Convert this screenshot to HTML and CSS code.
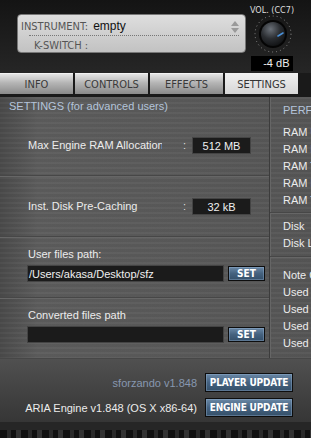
FILE: index.html
```html
<!DOCTYPE html>
<html lang="en">
<head>
  <meta charset="UTF-8">
  <meta name="viewport" content="width=device-width, initial-scale=1.0">
  <title>sforzando settings</title>
  <link rel="stylesheet" href="styles.css">
</head>
<body>
  <div class="player">
    <header class="header">
      <div class="instrument">
        <div class="inst-row inst-main">
          <span class="inst-label">INSTRUMENT:</span>
          <span class="inst-name">empty</span>
          <svg class="spinner" width="8" height="12" viewBox="0 0 8 12">
            <path d="M4 0 L8 5 L0 5 Z" fill="#9a9a9a"/>
            <path d="M4 12 L8 7 L0 7 Z" fill="#9a9a9a"/>
          </svg>
        </div>
        <div class="inst-row">
          <span class="inst-label kswitch">K-SWITCH :</span>
        </div>
      </div>
      <div class="volume">
        <div class="vol-label">VOL. (CC7)</div>
        <svg class="knob" width="40" height="40" viewBox="0 0 40 40">
          <defs>
            <radialGradient id="knobFace" cx="0.4" cy="0.3" r="0.8">
              <stop offset="0" stop-color="#6a7078"/>
              <stop offset="0.5" stop-color="#2a2d31"/>
              <stop offset="1" stop-color="#0c0d0e"/>
            </radialGradient>
          </defs>
          <circle cx="20" cy="20" r="18" fill="none" stroke="#8a8a8a" stroke-width="1" stroke-dasharray="1 3"/>
          <circle cx="20" cy="20" r="14" fill="#050505"/>
          <circle cx="20" cy="20" r="12" fill="url(#knobFace)"/>
          <line x1="25" y1="22" x2="30" y2="19" stroke="#4a90d8" stroke-width="1.6" stroke-linecap="round"/>
        </svg>
        <div class="vol-value">-4 dB</div>
      </div>
    </header>

    <nav class="tabs">
      <div class="tab">INFO</div>
      <div class="tab">CONTROLS</div>
      <div class="tab">EFFECTS</div>
      <div class="tab active">SETTINGS</div>
    </nav>

    <main class="panel">
      <section class="settings">
        <div class="title">SETTINGS (for advanced users)</div>

        <div class="block">
          <div class="field">
            <span class="field-label">Max Engine RAM Allocation</span>
            <span class="colon">:</span>
            <span class="value">512 MB</span>
          </div>
        </div>

        <div class="block">
          <div class="field">
            <span class="field-label">Inst. Disk Pre-Caching</span>
            <span class="colon">:</span>
            <span class="value">32 kB</span>
          </div>
        </div>

        <div class="block path-block">
          <div class="path-label">User files path:</div>
          <div class="path-row">
            <span class="path">/Users/akasa/Desktop/sfz</span>
            <button class="btn btn-set">SET</button>
          </div>
        </div>

        <div class="block path-block">
          <div class="path-label">Converted files path</div>
          <div class="path-row">
            <span class="path"></span>
            <button class="btn btn-set">SET</button>
          </div>
        </div>
      </section>

      <aside class="perf">
        <div class="title">PERFORMANCE</div>
        <div class="perf-group first">
          <div>RAM Used</div>
          <div>RAM Free</div>
          <div>RAM Total</div>
          <div>RAM Limit</div>
          <div>RAM Tot.</div>
        </div>
        <div class="perf-group">
          <div>Disk</div>
          <div>Disk Load</div>
        </div>
        <div class="perf-group">
          <div>Note Count</div>
          <div>Used</div>
          <div>Used</div>
          <div>Used</div>
          <div>Used</div>
        </div>
      </aside>
    </main>

    <footer class="versions">
      <div class="version-row">
        <span class="player-version">sforzando v1.848</span>
        <button class="btn btn-update">PLAYER UPDATE</button>
      </div>
      <div class="version-row">
        <span class="engine-version">ARIA Engine v1.848 (OS X x86-64)</span>
        <button class="btn btn-update">ENGINE UPDATE</button>
      </div>
    </footer>

    <div class="keys"></div>
  </div>
</body>
</html>
```

FILE: styles.css
```css
body {
  margin: 0;
  background: #1e1e1e;
  font-family: 'Liberation Sans', Arial, sans-serif;
}

.player {
  width: 311px;
  height: 438px;
  overflow: hidden;
  display: flex;
  flex-direction: column;
  background: #1e1e1e;
}

/* header */
.header {
  height: 73px;
  display: flex;
  background: linear-gradient(to bottom, #141414, #262626);
  box-sizing: border-box;
  padding-left: 17px;
}

.instrument {
  width: 229px;
  height: 39px;
  margin-top: 14px;
  box-sizing: border-box;
  border: 1px solid #777;
  border-radius: 4px;
  background: linear-gradient(to bottom, #dedede, #c2c2c2);
  padding: 0 6px 0 3px;
}

.inst-row {
  height: 18px;
  display: flex;
  align-items: center;
}

.inst-main {
  border-bottom: 1px dotted #777;
  margin-left: 8px;
  padding-top: 2px;
}

.inst-label {
  font-family: 'Liberation Sans Narrow', 'DejaVu Sans Condensed', sans-serif;
  font-size: 11px;
  color: #555;
}

.inst-main .inst-label {
  margin-left: -8px;
}

.kswitch {
  margin-left: 13px;
}

.inst-name {
  margin-left: 5px;
  font-size: 12px;
  color: #111;
  flex: 1;
}

.spinner {
  margin-top: 1px;
}

.volume {
  width: 46px;
  margin-left: 1px;
  display: flex;
  flex-direction: column;
  align-items: center;
  padding-top: 5px;
}

.vol-label {
  font-family: 'Liberation Sans Narrow', 'DejaVu Sans Condensed', sans-serif;
  font-size: 9px;
  color: #ddd;
  white-space: nowrap;
  margin-left: 4px;
}

.knob {
  margin: -1px 0 0 6px;
}

.vol-value {
  width: 42px;
  height: 15px;
  margin: 2px 0 0 3px;
  background: #000;
  color: #eee;
  font-size: 11px;
  line-height: 15px;
  text-align: right;
  padding-right: 3px;
  box-sizing: border-box;
}

/* tabs */
.tabs {
  height: 24px;
  display: flex;
  gap: 2px;
  background: #1a1a1a;
  padding-bottom: 3px;
  box-sizing: border-box;
}

.tab {
  width: 73px;
  height: 21px;
  line-height: 21px;
  text-align: center;
  font-family: 'Liberation Sans Narrow', 'DejaVu Sans Condensed', sans-serif;
  font-size: 11px;
  color: #3a3a3a;
  background: linear-gradient(to bottom, #e4e4e4, #b4b4b4 45%, #8a8a8a);
  border-top: 1px solid #f2f2f2;
  box-sizing: border-box;
}

.tab.active {
  background: linear-gradient(to bottom, #f0f0f0, #d6d6d6);
  color: #333;
}

/* main panel */
.panel {
  height: 261px;
  display: grid;
  grid-template-columns: 270px 1fr;
  background:
    repeating-linear-gradient(to bottom, rgba(255,255,255,0.025) 0, rgba(255,255,255,0.025) 2px, rgba(0,0,0,0.03) 2px, rgba(0,0,0,0.03) 5px),
    linear-gradient(to right, #4a4a4a, #5d5d5d 12%, #5a5a5a 60%, #565656);
}

.title {
  height: 18px;
  line-height: 18px;
  font-size: 11px;
  color: #b4c4da;
  padding-left: 9px;
}

.settings {
  border-right: 1px solid #3c3c3c;
  box-shadow: 1px 0 0 #666;
}

.block {
  height: 61px;
  box-sizing: border-box;
  border-bottom: 1px solid #474747;
  box-shadow: 0 1px 0 #666;
  padding-left: 28px;
}

.field {
  display: flex;
  align-items: center;
  height: 100%;
}

.field-label {
  width: 134px;
  overflow: hidden;
  white-space: nowrap;
  font-size: 11px;
  color: #ececec;
}

.colon {
  width: 30px;
  text-align: right;
  padding-right: 6px;
  box-sizing: border-box;
  font-size: 11px;
  color: #ddd;
}

.value {
  width: 59px;
  height: 17px;
  line-height: 17px;
  background: #1b1b1b;
  border: 1px solid #444;
  box-sizing: border-box;
  font-size: 11px;
  color: #f0f0f0;
  text-align: center;
}

.path-block {
  padding-left: 27px;
  padding-top: 11px;
}

.path-label {
  font-size: 11px;
  color: #ececec;
  padding-left: 1px;
  height: 16px;
}

.path-row {
  display: flex;
  align-items: center;
  gap: 4px;
  margin-top: 1px;
}

.path {
  width: 197px;
  height: 17px;
  line-height: 17px;
  background: #1b1b1b;
  border: 1px solid #444;
  box-sizing: border-box;
  font-size: 11px;
  color: #f0f0f0;
  padding-left: 1px;
  white-space: nowrap;
}

.btn {
  font-family: 'Liberation Sans Narrow', 'DejaVu Sans Condensed', sans-serif;
  font-weight: bold;
  color: #fff;
  border: 1px solid #0e0e0e;
  background: linear-gradient(to bottom, #6a88a6, #45627f 50%, #35506a);
  box-shadow: inset 0 0 0 1px rgba(160,190,220,0.35);
  padding: 0;
  cursor: pointer;
}

.btn-set {
  width: 37px;
  height: 15px;
  font-size: 10px;
  line-height: 13px;
}

/* performance column */
.perf {
  font-size: 11px;
  color: #ececec;
  white-space: nowrap;
  overflow: hidden;
}

.perf .title {
  padding-left: 13px;
  height: 25px;
  line-height: 27px;
}

.perf-group {
  padding: 0 0 0 13px;
  border-bottom: 1px solid #474747;
  box-shadow: 0 1px 0 #666;
  line-height: 17px;
}

.perf-group.first {
  padding-top: 2px;
  padding-bottom: 3px;
}

.perf-group:nth-of-type(3) {
  padding-top: 5px;
  padding-bottom: 4px;
}

.perf-group:last-child {
  padding-top: 10px;
  border-bottom: none;
  box-shadow: none;
}

/* versions */
.versions {
  height: 64px;
  box-sizing: border-box;
  padding: 14px 0 0 0;
  display: flex;
  flex-direction: column;
  gap: 6px;
  background: linear-gradient(to bottom, #505050, #363636);
  border-top: 1px solid #474747;
}

.version-row {
  display: flex;
  align-items: center;
  justify-content: flex-end;
  padding-right: 18px;
  gap: 8px;
}

.player-version {
  font-size: 11px;
  color: #8797b0;
}

.engine-version {
  font-size: 11px;
  color: #ececec;
}

.btn-update {
  width: 88px;
  height: 19px;
  font-size: 10px;
  letter-spacing: -0.2px;
}

/* keyboard strip */
.keys {
  flex: 1;
  background:
    repeating-linear-gradient(to right, #111 0, #111 7px, #2a2a2a 7px, #2a2a2a 11px, #111 11px, #111 16px, #333 16px, #333 21px);
  background-size: 100% 8px;
  background-position: 0 bottom;
  background-repeat: no-repeat;
  background-color: #262626;
}
```
